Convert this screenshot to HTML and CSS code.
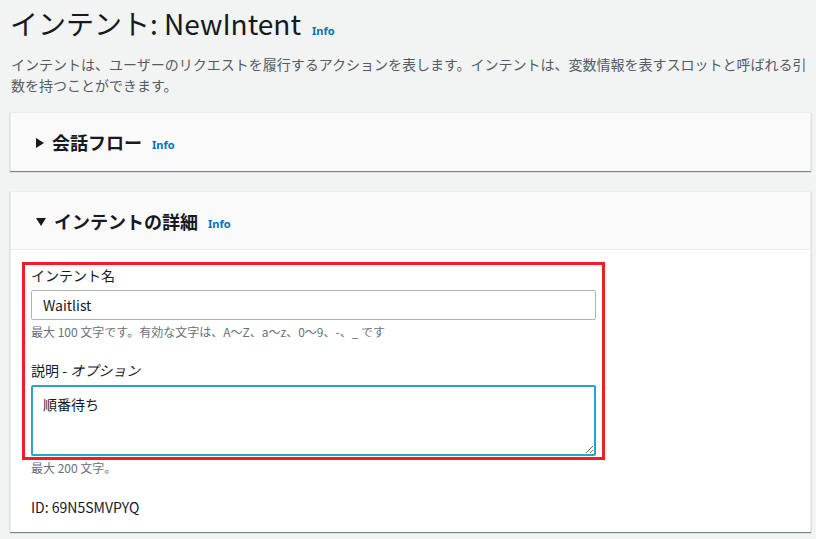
FILE: index.html
```html
<!DOCTYPE html>
<html lang="ja">
<head>
    <meta charset="UTF-8">
    <title>インテント: NewIntent</title>
    <link rel="stylesheet" href="styles.css">
</head>
<body>
    <h1 class="page-title">インテント: NewIntent <a class="info" href="#">Info</a></h1>
    <p class="page-desc">インテントは、ユーザーのリクエストを履行するアクションを表します。インテントは、変数情報を表すスロットと呼ばれる引数を持つことができます。</p>

    <div class="card">
        <div class="card-header">
            <svg class="caret" width="8" height="10" viewBox="0 0 8 10"><path d="M0 0 L8 5 L0 10 Z" fill="#16191f"/></svg>
            <h2>会話フロー</h2>
            <a class="info" href="#">Info</a>
        </div>
    </div>

    <div class="card">
        <div class="card-header open">
            <svg class="caret" width="10" height="8" viewBox="0 0 10 8"><path d="M0 0 L10 0 L5 8 Z" fill="#16191f"/></svg>
            <h2>インテントの詳細</h2>
            <a class="info" href="#">Info</a>
        </div>
        <div class="card-body">
            <div class="highlight">
                <label class="field-label" for="intent-name">インテント名</label>
                <input class="field-input" id="intent-name" type="text" value="Waitlist">
                <div class="hint">最大 100 文字です。有効な文字は、A〜Z、a〜z、0〜9、-、_ です</div>

                <label class="field-label second" for="intent-desc">説明 - <i>オプション</i></label>
                <textarea class="field-text" id="intent-desc">順番待ち</textarea>
            </div>
            <div class="hint">最大 200 文字。</div>
            <div class="intent-id">ID: 69N5SMVPYQ</div>
        </div>
    </div>
</body>
</html>
```

FILE: styles.css
```css
body {
    margin: 0;
    padding: 0 5px 0 10px;
    background-color: #f2f3f3;
    font-family: "Noto Sans CJK JP", "Noto Sans", sans-serif;
    color: #16191f;
}
.info {
    font-family: "Noto Sans", sans-serif;
    font-size: 11px;
    font-weight: bold;
    line-height: 1;
    color: #0073bb;
    text-decoration: none;
}
.page-title {
    display: flex;
    align-items: baseline;
    margin: 0;
    padding-top: 6px;
    height: 34px;
    font-size: 28px;
    font-weight: normal;
    line-height: 34px;
}
.page-title .info {
    margin-left: 11px;
}
.page-desc {
    margin: 14px 0 16px;
    padding-left: 1px;
    font-size: 14px;
    line-height: 21px;
    color: #545b64;
}
.card {
    background-color: #fff;
    border: 1px solid #eaeded;
    border-bottom: none;
    box-shadow: 0 1px 1px rgba(0, 28, 36, 0.5);
    margin-bottom: 20px;
}
.card-header {
    display: flex;
    align-items: center;
    background-color: #fafafa;
    padding: 18px 24px 17px;
}
.card-header.open {
    padding-bottom: 16px;
    border-bottom: 1px solid #eaeded;
}
.card-header h2 {
    margin: 0 10px 0 8px;
    font-size: 18px;
    font-weight: bold;
    line-height: 23px;
}
.card-header .info {
    margin-top: 4px;
}
.caret {
    margin-left: 1px;
}
.card-body {
    padding: 12px 20px 15px;
}
.highlight {
    width: 565px;
    margin-left: -9px;
    padding: 0 6px 1px;
    border: 3px solid #f01e22;
}
.field-label {
    display: block;
    font-size: 14px;
    line-height: 20px;
}
.field-label.second {
    margin-top: 20px;
}
.field-label i {
    font-style: italic;
}
.field-input {
    display: block;
    box-sizing: border-box;
    width: 565px;
    height: 30px;
    margin-top: 5px;
    padding: 0 11px;
    border: 1px solid #aab7b8;
    border-radius: 2px;
    font-family: "Noto Sans CJK JP", "Noto Sans", sans-serif;
    font-size: 14px;
    color: #16191f;
}
.field-text {
    display: block;
    box-sizing: border-box;
    width: 565px;
    height: 71px;
    margin-top: 5px;
    padding: 7px 10px;
    border: 2px solid #2ea2c8;
    border-radius: 2px;
    font-family: "Noto Sans CJK JP", "Noto Sans", sans-serif;
    font-size: 14px;
    line-height: 20px;
    color: #16191f;
    outline: none;
}
.hint {
    margin-top: 4px;
    font-size: 12px;
    line-height: 16px;
    color: #687078;
}
.highlight + .hint {
    margin-top: 0;
}
.intent-id {
    margin-top: 21px;
    font-size: 14px;
    line-height: 20px;
    color: #16191f;
}
```
